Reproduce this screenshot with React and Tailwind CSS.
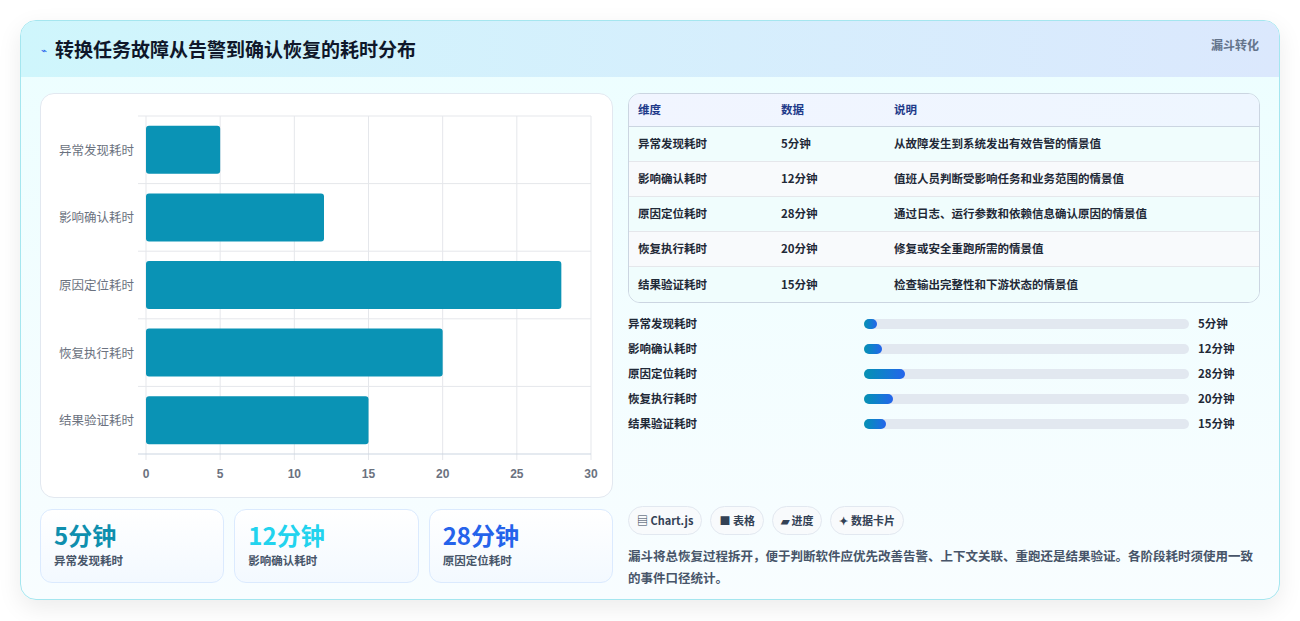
import React from "react";

const rows = [
  ["异常发现耗时", 5, "从故障发生到系统发出有效告警的情景值"],
  ["影响确认耗时", 12, "值班人员判断受影响任务和业务范围的情景值"],
  ["原因定位耗时", 28, "通过日志、运行参数和依赖信息确认原因的情景值"],
  ["恢复执行耗时", 20, "修复或安全重跑所需的情景值"],
  ["结果验证耗时", 15, "检查输出完整性和下游状态的情景值"],
];

function Chart() {
  const x0 = 105, w = 445, y0 = 22, h = 338;
  const rh = h / 5;
  return (
    <svg width="572" height="404" className="block">
      {[0, 5, 10, 15, 20, 25, 30].map((t) => {
        const x = x0 + (t / 30) * w;
        return (
          <g key={t}>
            <line x1={x} y1={y0} x2={x} y2={y0 + h + (t === 0 ? 0 : 0)} stroke="#e5e7eb" />
            <line x1={x} y1={y0 + h} x2={x} y2={y0 + h + 6} stroke="#e5e7eb" />
            <text x={x} y={y0 + h + 24} textAnchor="middle" fontSize="12" fill="#6b7280" fontFamily="Liberation Sans, sans-serif" fontWeight="bold">{t}</text>
          </g>
        );
      })}
      {[0, 1, 2, 3, 4, 5].map((i) => (
        <line key={i} x1={x0 - 8} x2={x0 + w} y1={y0 + i * rh} y2={y0 + i * rh} stroke={i === 5 ? "#cbd5e1" : "#e5e7eb"} />
      ))}
      {rows.map((r, i) => {
        const cy = y0 + i * rh + rh / 2;
        return (
          <g key={i}>
            <rect x={x0} y={cy - 24} width={(r[1] / 30) * w} height={48} rx="3" fill="#0a93b5" />
            <text x={x0 - 12} y={cy + 5} textAnchor="end" fontSize="12.5" fill="#6b7280" fontFamily="Noto Sans CJK SC, sans-serif">{r[0]}</text>
          </g>
        );
      })}
    </svg>
  );
}

export default function App() {
  const f = { fontFamily: "'Noto Sans CJK SC', 'Noto Sans', sans-serif" };
  return (
    <div style={f} className="w-[1300px] h-[621px] bg-white pt-[20px] px-[20px]">
      <div className="h-[580px] rounded-[16px] border border-[#a5e6ef] bg-gradient-to-b from-[#ecfeff] to-[#f8fdff] shadow-[0_8px_24px_rgba(0,0,0,0.08)] overflow-hidden">
        <div className="h-[56px] bg-gradient-to-r from-[#cff6fc] to-[#dbe8fd] flex items-center justify-between px-[20px]">
          <div className="flex items-center gap-[8px]">
            <span className="text-[#2563eb] text-[10px]">⌁</span>
            <span className="text-[19px] font-bold text-[#0f172a]">转换任务故障从告警到确认恢复的耗时分布</span>
          </div>
          <span className="text-[12px] font-bold text-[#64748b] -mt-[8px]">漏斗转化</span>
        </div>
        <div className="flex gap-[15px] px-[19px] pt-[16px]">
          <div className="w-[573px] flex flex-col gap-[11px]">
            <div className="h-[405px] bg-white rounded-[14px] border border-[#e2e8f0]">
              <Chart />
            </div>
            <div className="grid grid-cols-3 gap-[10px]">
              {[["5分钟", "text-[#0e8fae]", "异常发现耗时"], ["12分钟", "text-[#22d3ee]", "影响确认耗时"], ["28分钟", "text-[#2563eb]", "原因定位耗时"]].map((c) => (
                <div key={c[2]} className="h-[74px] rounded-[12px] border border-[#dbeafe] bg-gradient-to-b from-white to-[#f3f9ff] px-[13px] pt-[8px]">
                  <div className={`text-[24px] leading-[34px] font-bold ${c[1]}`}>{c[0]}</div>
                  <div className="text-[11.5px] font-bold text-[#475569]">{c[2]}</div>
                </div>
              ))}
            </div>
          </div>
          <div className="flex-1 pr-[0px] w-[634px]">
            <div className="rounded-[12px] border border-[#cbd5e1] overflow-hidden text-[11.5px] font-bold">
              <div className="flex h-[33px] items-center bg-gradient-to-r from-[#f1f5ff] to-[#eef6ff] text-[#1e3a8a] border-b border-[#cbd5e1]">
                <div className="w-[152px] pl-[9px]">维度</div><div className="w-[113px]">数据</div><div>说明</div>
              </div>
              {rows.map((r, i) => (
                <div key={i} className={`flex h-[35px] items-center text-[#1f2937] ${i < 4 ? "border-b border-[#e5e7eb]" : ""} ${i % 2 ? "bg-[#f8fafc]" : "bg-[#f0fdfd]"}`}>
                  <div className="w-[152px] pl-[9px]">{r[0]}</div><div className="w-[113px]">{r[1]}分钟</div><div>{r[2]}</div>
                </div>
              ))}
            </div>
            <div className="mt-[12px] flex flex-col gap-[8px] text-[11.5px] font-bold text-[#1f2937]">
              {rows.map((r) => (
                <div key={r[0]} className="flex items-center h-[17px]">
                  <div className="w-[236px]">{r[0]}</div>
                  <div className="w-[325px] h-[10px] rounded-full bg-[#e2e8f0]">
                    <div className="h-full rounded-full bg-gradient-to-r from-[#0891b2] to-[#2563eb]" style={{ width: `${Math.max(4, (r[1] / 100) * 100 * 0.45)}%` }} />
                  </div>
                  <div className="ml-[9px]">{r[1]}分钟</div>
                </div>
              ))}
            </div>
            <div className="mt-[74px] flex gap-[8px] text-[11px] font-bold text-[#334155]">
              {["▤ Chart.js", "■ 表格", "▰ 进度", "✦ 数据卡片"].map((t) => (
                <div key={t} className="h-[29px] px-[8px] flex items-center rounded-full border border-[#e2e8f0] bg-[#f8fafc]">{t}</div>
              ))}
            </div>
            <p className="mt-[10px] text-[12.5px] leading-[22px] font-bold text-[#475569]">漏斗将总恢复过程拆开，便于判断软件应优先改善告警、上下文关联、重跑还是结果验证。各阶段耗时须使用一致的事件口径统计。</p>
          </div>
        </div>
      </div>
    </div>
  );
}
